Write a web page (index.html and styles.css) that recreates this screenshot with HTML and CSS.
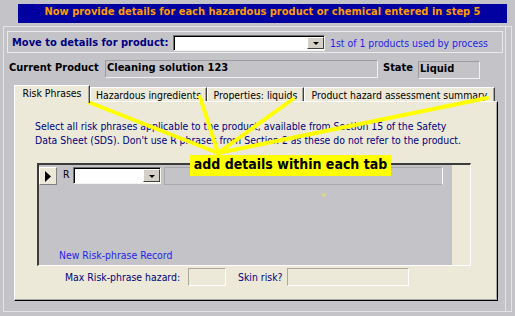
FILE: index.html
```html
<!DOCTYPE html>
<html lang="en">
<head>
    <meta charset="UTF-8">
    <meta name="viewport" content="width=device-width, initial-scale=1.0">
    <title>Hazardous products - step 6</title>
    <link rel="stylesheet" href="styles.css">
</head>
<body>
    <div class="screen">
        <div class="banner">Now provide details for each hazardous product or chemical entered in step 5</div>

        <div class="form-frame">
            <div class="nav-box">
                <span class="nav-label">Move to details for product:</span>
                <div class="combo nav-combo">
                    <span class="combo-value"></span>
                    <span class="combo-btn"><i class="arrow-down"></i></span>
                </div>
                <span class="nav-count">1st of 1 products used by process</span>
            </div>

            <div class="current-row">
                <span class="bold-label product-label">Current Product</span>
                <div class="grey-field product-field">Cleaning solution 123</div>
                <span class="bold-label state-label">State</span>
                <div class="grey-field state-field">Liquid</div>
            </div>

            <div class="tab-strip">
                <div class="tab tab-active tab-risk">Risk Phrases</div>
                <div class="tab tab-ingredients">Hazardous ingredients</div>
                <div class="tab tab-properties">Properties: liquids</div>
                <div class="tab tab-summary">Product hazard assessment summary</div>
            </div>

            <div class="tab-panel">
                <p class="help-text">Select all risk phrases applicable to the product, available from Section 15 of the Safety<br>Data Sheet (SDS). Don't use R phrases from Section 2 as these do not refer to the product.</p>

                <div class="subform">
                    <div class="detail">
                        <div class="record-row">
                            <div class="record-selector">
                                <svg width="6" height="11" viewBox="0 0 6 11"><polygon points="0,0 6,5.5 0,11" fill="#000"/></svg>
                            </div>
                            <span class="r-label">R</span>
                            <div class="combo r-combo">
                                <span class="combo-value"></span>
                                <span class="combo-btn"><i class="arrow-down"></i></span>
                            </div>
                            <div class="phrase-field"></div>
                        </div>
                        <div class="new-record">New Risk-phrase Record</div>
                    </div>
                </div>

                <div class="summary-row">
                    <span class="summary-label max-label">Max Risk-phrase hazard:</span>
                    <div class="beige-field max-field"></div>
                    <span class="summary-label skin-label">Skin risk?</span>
                    <div class="beige-field skin-field"></div>
                </div>
            </div>
        </div>

        <!-- annotation laid over the form -->
        <svg class="callout-lines" width="515" height="316" viewBox="0 0 515 316">
            <g stroke="#ffff00" stroke-width="4" stroke-linecap="round">
                <line x1="78" y1="98" x2="218" y2="153"/>
                <line x1="200" y1="97" x2="218" y2="153"/>
                <line x1="293" y1="99" x2="218" y2="153"/>
                <line x1="487" y1="98" x2="218" y2="153"/>
            </g>
            <circle cx="324" cy="195" r="2" fill="#d9d98a"/>
        </svg>
        <div class="callout">add details within each tab</div>
    </div>
</body>
</html>
```

FILE: styles.css
```css
body {
    margin: 0;
    background-color: #c4c3c7;
    font-family: "DejaVu Sans Condensed", "DejaVu Sans", sans-serif;
    font-size: 10.4px;
}
.screen {
    position: relative;
    width: 515px;
    height: 316px;
    overflow: hidden;
}
.banner {
    margin: 4px 0 0 18px;
    width: 489px;
    height: 19px;
    box-sizing: border-box;
    padding-bottom: 4px;
    background-color: #0000a0;
    color: #ff9c00;
    font-weight: bold;
    font-size: 11px;
    line-height: 15px;
    text-align: center;
}
.form-frame {
    margin: 3px 0 0 3px;
    width: 509px;
    height: 286px;
    box-sizing: border-box;
    border: 1px solid #e4e3e6;
    box-shadow: inset -5px 0 0 #c4c3c7, inset -6px 0 0 #e4e3e6;
}

/* product navigation */
.nav-box {
    display: flex;
    align-items: center;
    margin: 4px 0 0 3px;
    width: 496px;
    height: 22px;
    box-sizing: border-box;
    padding: 2px 0 0 4px;
    border: 1px solid #ebeaed;
}
.nav-label {
    color: #000080;
    font-weight: bold;
    font-size: 11px;
    line-height: 16px;
    width: 161px;
}
.nav-count {
    margin-left: 5px;
    color: #1e1eee;
    line-height: 16px;
}
.combo {
    display: flex;
    box-sizing: border-box;
    background-color: #fff;
    border: 1px solid;
    border-color: #6d6d6d #f4f3ee #f4f3ee #6d6d6d;
    box-shadow: inset 1px 1px 0 #000;
}
.combo-value {
    flex: 1;
}
.combo-btn {
    display: flex;
    align-items: center;
    justify-content: center;
    box-sizing: border-box;
    width: 17px;
    margin: 1px 0 1px 0;
    background-color: #d4d0c8;
    border: 1px solid;
    border-color: #fff #404040 #404040 #fff;
}
.arrow-down {
    width: 0;
    height: 0;
    border-left: 3px solid transparent;
    border-right: 3px solid transparent;
    border-top: 3px solid #000;
    margin-top: 1px;
}
.nav-combo {
    width: 152px;
    height: 16px;
}

/* current product */
.current-row {
    display: flex;
    align-items: flex-start;
    margin-top: 7px;
    padding-left: 5px;
    height: 18px;
}
.bold-label {
    font-weight: bold;
    font-size: 11px;
    line-height: 13px;
    margin-top: 1px;
    color: #000;
}
.product-label {
    width: 96px;
}
.state-label {
    margin-left: 5px;
    width: 35px;
}
.grey-field {
    box-sizing: border-box;
    height: 18px;
    padding: 0 0 3px 1px;
    border: 1px solid;
    border-color: #9c9ba0 #f2f2f2 #f2f2f2 #9c9ba0;
    font-weight: bold;
    font-size: 11px;
    line-height: 13px;
    color: #000;
}
.product-field {
    width: 273px;
}
.state-field {
    width: 62px;
    margin-top: 1px;
}

/* tabs */
.tab-strip {
    display: flex;
    align-items: flex-end;
    margin: 7px 0 0 10px;
    height: 16px;
}
.tab {
    box-sizing: border-box;
    height: 14px;
    padding-top: 2px;
    line-height: 11px;
    text-align: center;
    color: #000;
    white-space: nowrap;
    background-color: #ece9d8;
    border-top: 1px solid #fff;
    border-left: 1px solid #fff;
    border-right: 1px solid #404040;
    box-shadow: inset -1px 0 0 #a7a6a0;
}
.tab-active {
    position: relative;
    z-index: 1;
    height: 18px;
    margin-bottom: -2px;
}
.tab-risk { width: 76px; }
.tab-ingredients { width: 117px; }
.tab-properties { width: 97px; }
.tab-summary { width: 191px; }

.tab-panel {
    margin-left: 10px;
    width: 484px;
    height: 200px;
    box-sizing: border-box;
    padding: 17px 0 0 20px;
    background-color: #ece9d8;
    border: 1px solid;
    border-color: #fff #000 #000 #fff;
    box-shadow: inset -1px -1px 0 #a7a6a0;
}
.help-text {
    margin: 0;
    color: #000080;
    line-height: 14px;
    white-space: nowrap;
}

/* risk phrase subform */
.subform {
    margin: 16px 0 0 2px;
    width: 434px;
    height: 103px;
    box-sizing: border-box;
    border-style: solid;
    border-width: 2px 1px 1px 2px;
    border-color: #3c3c3c #fff #fff #3c3c3c;
    background-color: #ece9d8;
}
.detail {
    display: flex;
    flex-direction: column;
    width: 413px;
    height: 100px;
    box-sizing: border-box;
    padding-top: 2px;
    background-color: #c4c3c7;
}
.record-row {
    display: flex;
    align-items: flex-start;
}
.record-selector {
    display: flex;
    align-items: center;
    justify-content: center;
    width: 18px;
    height: 18px;
    box-sizing: border-box;
    background-color: #ece9d8;
    border: 1px solid;
    border-color: #fff #808080 #808080 #fff;
}
.r-label {
    margin-left: 6px;
    width: 10px;
    line-height: 14px;
    color: #000;
}
.r-combo {
    width: 88px;
    height: 17px;
}
.phrase-field {
    margin-left: 3px;
    width: 279px;
    height: 18px;
    box-sizing: border-box;
    border: 1px solid;
    border-color: #a9a8ab #fff #a9a8ab #a9a8ab;
}
.new-record {
    margin-top: auto;
    padding: 0 0 3px 20px;
    line-height: 14px;
    color: #1e1eee;
}

/* summary fields */
.summary-row {
    display: flex;
    margin: 2px 0 0 30px;
    height: 18px;
}
.summary-label {
    color: #000080;
    line-height: 18px;
    white-space: nowrap;
}
.max-label { width: 123px; }
.skin-label {
    margin-left: 12px;
    width: 49px;
}
.beige-field {
    height: 18px;
    box-sizing: border-box;
    border: 1px solid;
    border-color: #aca899 #fff #fff #aca899;
}
.max-field { width: 38px; }
.skin-field { width: 122px; }

/* annotation */
.callout-lines {
    position: absolute;
    left: 0;
    top: 0;
    pointer-events: none;
}
.callout {
    position: absolute;
    left: 190px;
    top: 155px;
    width: 201px;
    height: 21px;
    box-sizing: border-box;
    padding-bottom: 2px;
    background-color: #ffff00;
    color: #000;
    font-weight: bold;
    font-size: 14px;
    line-height: 19px;
    text-align: center;
}
```
